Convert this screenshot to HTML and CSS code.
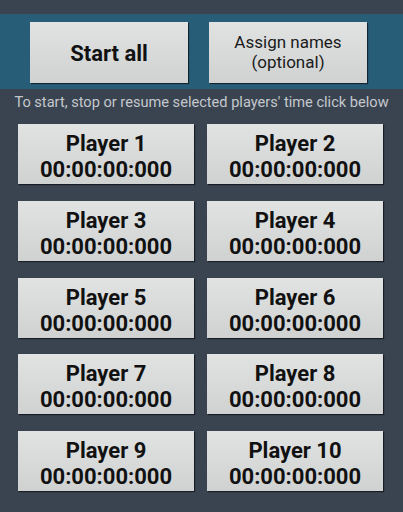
FILE: index.html
```html
<!DOCTYPE html>
<html>
<head>
    <meta charset="utf-8"/>
    <title>Stopwatch players</title>
    <link rel="stylesheet" href="styles.css">
</head>
<body>
<div class="statusbar"></div>

<div class="topband">
    <div class="btn btn-start">Start all</div>
    <div class="btn btn-names">Assign names<br/>(optional)</div>
</div>

<div class="hint">To start, stop or resume selected players' time click below</div>

<div class="players">
    <div class="btn player"><span>Player 1</span><span>00:00:00:000</span></div>
    <div class="btn player"><span>Player 2</span><span>00:00:00:000</span></div>
    <div class="btn player"><span>Player 3</span><span>00:00:00:000</span></div>
    <div class="btn player"><span>Player 4</span><span>00:00:00:000</span></div>
    <div class="btn player"><span>Player 5</span><span>00:00:00:000</span></div>
    <div class="btn player"><span>Player 6</span><span>00:00:00:000</span></div>
    <div class="btn player"><span>Player 7</span><span>00:00:00:000</span></div>
    <div class="btn player"><span>Player 8</span><span>00:00:00:000</span></div>
    <div class="btn player"><span>Player 9</span><span>00:00:00:000</span></div>
    <div class="btn player"><span>Player 10</span><span>00:00:00:000</span></div>
</div>
</body>
</html>
```

FILE: styles.css
```css
body, html {
    margin: 0px;
    padding: 0px;
    background: #3a4350;
    font-family: Roboto, "Liberation Sans", sans-serif;
    height: 512px;
    overflow: hidden;
}
.statusbar {
    height: 14px;
    background: #3a4350;
}
.topband {
    background: #285d78;
    height: 75px;
    box-sizing: border-box;
    padding: 8px 0 0 30px;
    display: flex;
    gap: 21px;
}
.btn {
    background: linear-gradient(to bottom, #e1e3e3, #d0d2d2);
    box-shadow: 1px 1px 1px rgba(10, 14, 20, 0.7);
    color: #111;
    display: flex;
    flex-direction: column;
    align-items: center;
    justify-content: center;
    text-align: center;
    box-sizing: border-box;
}
.btn-start {
    width: 158px;
    height: 61px;
    font-size: 22px;
    font-weight: bold;
    padding-top: 2px;
}
.btn-names {
    width: 158px;
    height: 61px;
    font-size: 17px;
    line-height: 20px;
    display: block;
    padding-top: 10px;
    color: #1a1a1a;
}
.hint {
    color: #c4c8cd;
    font-size: 14.6px;
    line-height: 20px;
    text-align: center;
    margin: 3px 0 12px 0;
    white-space: nowrap;
}
.players {
    display: grid;
    grid-template-columns: 176px 176px;
    column-gap: 13px;
    row-gap: 16.75px;
    padding-left: 18px;
}
.player {
    height: 60px;
    font-size: 22px;
    font-weight: bold;
    line-height: 26px;
    padding-top: 6px;
}
```
